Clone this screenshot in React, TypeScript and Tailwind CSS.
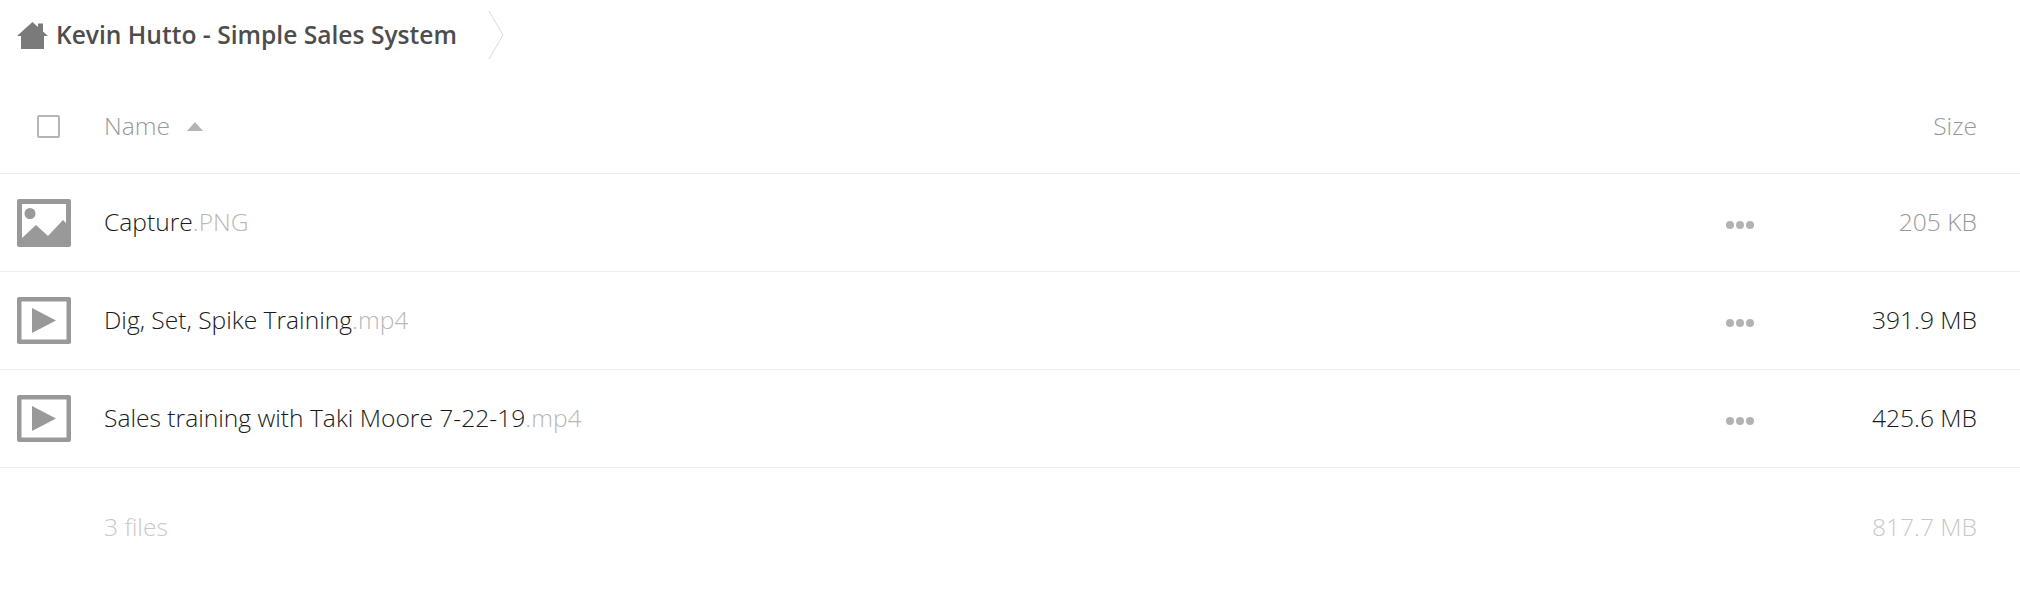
const font = "font-['Open_Sans',sans-serif]";

function House() {
  return (
    <svg width="31" height="27" viewBox="0 0 31 27" className="shrink-0">
      <path d="M15.5 0 L21 5 V1.5 H26 V9.5 L31 14 H27 V27 H4 V14 H0 Z" fill="#7a7a7a" />
    </svg>
  );
}

function ImageIcon() {
  return (
    <svg width="54" height="48" viewBox="0 0 54 48">
      <rect width="54" height="48" rx="2" fill="#999" />
      <rect x="5" y="5" width="44" height="38" fill="#fff" />
      <circle cx="13" cy="14.5" r="5.5" fill="#999" />
      <path d="M5 43 V39 L19 26 L31 37 L46 21 L49 24 V43 Z" fill="#999" />
    </svg>
  );
}

function PlayIcon() {
  return (
    <svg width="54" height="47" viewBox="0 0 54 47">
      <rect width="54" height="47" rx="2" fill="#999" />
      <rect x="4.5" y="4.5" width="45" height="38" fill="#fff" />
      <path d="M15 11 L39 23.5 L15 36 Z" fill="#999" />
    </svg>
  );
}

function Dots() {
  return (
    <div className="flex gap-[2px] pt-[5px]">
      <span className="w-2 h-2 rounded-full bg-[#b3b3b3]" />
      <span className="w-2 h-2 rounded-full bg-[#b3b3b3]" />
      <span className="w-2 h-2 rounded-full bg-[#b3b3b3]" />
    </div>
  );
}

const rows = [
  { icon: <ImageIcon />, name: "Capture", ext: ".PNG", size: "205 KB", sizeColor: "text-[#999]" },
  { icon: <PlayIcon />, name: "Dig, Set, Spike Training", ext: ".mp4", size: "391.9 MB", sizeColor: "text-[#1a1a1a]" },
  { icon: <PlayIcon />, name: "Sales training with Taki Moore 7-22-19", ext: ".mp4", size: "425.6 MB", sizeColor: "text-[#1a1a1a]" },
];

export default function App() {
  return (
    <div className={`${font} bg-white h-[599px] w-full overflow-hidden font-light text-[24.6px]`}>
      <div className="flex items-center h-[70px] pl-[17px]">
        <House />
        <span className="ml-[8px] font-semibold text-[#4d4d4d] text-[24.6px]">Kevin Hutto - Simple Sales System</span>
        <svg width="16" height="48" viewBox="0 0 16 48" className="ml-[31px]">
          <path d="M1 0 L15 24 L1 48" fill="none" stroke="#d9d9d9" strokeWidth="1" />
        </svg>
      </div>
      <div className="flex items-center h-[104px] border-b border-[#ededed] pl-[37px] pr-[43px] pt-[9px]">
        <span className="w-[23px] h-[23px] border-2 border-[#b5b5b5] rounded-[2px]" />
        <span className="ml-[44px] text-[#999]">Name</span>
        <svg width="16" height="9" viewBox="0 0 16 9" className="ml-[17px]">
          <path d="M8 0 L16 9 H0 Z" fill="#b3b3b3" />
        </svg>
        <span className="ml-auto text-[#999]">Size</span>
      </div>
      {rows.map((r) => (
        <div key={r.name} className="flex items-center h-[98px] border-b border-[#ededed] pl-[17px] pr-[43px]">
          <div className="w-[87px] shrink-0">{r.icon}</div>
          <span className="text-[#1a1a1a]">
            {r.name}
            <span className="text-[#b8b8b8]">{r.ext}</span>
          </span>
          <div className="ml-auto flex items-center">
            <Dots />
            <span className={`w-[223px] text-right ${r.sizeColor}`}>{r.size}</span>
          </div>
        </div>
      ))}
      <div className="flex items-center justify-between h-[118px] pl-[104px] pr-[43px] text-[#c8c8c8]">
        <span>3 files</span>
        <span>817.7 MB</span>
      </div>
    </div>
  );
}
